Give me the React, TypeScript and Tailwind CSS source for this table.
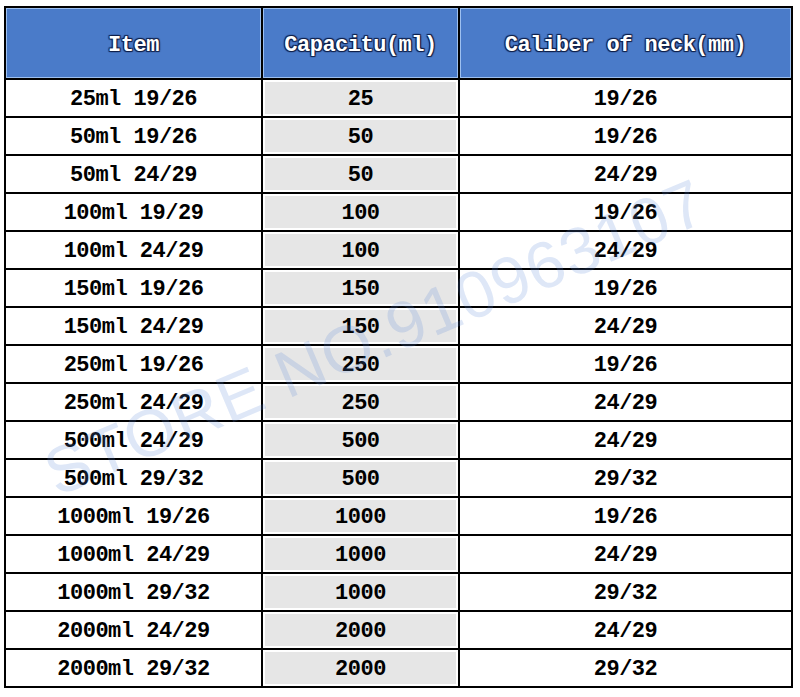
import type { ReactNode } from "react";

type Row = {
    item: string;
    capacity: string;
    neck: string;
};

const Rows: Row[] = [
    { item: "25ml 19/26", capacity: "25", neck: "19/26" },
    { item: "50ml 19/26", capacity: "50", neck: "19/26" },
    { item: "50ml 24/29", capacity: "50", neck: "24/29" },
    { item: "100ml 19/29", capacity: "100", neck: "19/26" },
    { item: "100ml 24/29", capacity: "100", neck: "24/29" },
    { item: "150ml 19/26", capacity: "150", neck: "19/26" },
    { item: "150ml 24/29", capacity: "150", neck: "24/29" },
    { item: "250ml 19/26", capacity: "250", neck: "19/26" },
    { item: "250ml 24/29", capacity: "250", neck: "24/29" },
    { item: "500ml 24/29", capacity: "500", neck: "24/29" },
    { item: "500ml 29/32", capacity: "500", neck: "29/32" },
    { item: "1000ml 19/26", capacity: "1000", neck: "19/26" },
    { item: "1000ml 24/29", capacity: "1000", neck: "24/29" },
    { item: "1000ml 29/32", capacity: "1000", neck: "29/32" },
    { item: "2000ml 24/29", capacity: "2000", neck: "24/29" },
    { item: "2000ml 29/32", capacity: "2000", neck: "29/32" },
];

const HeadCell = ({ children }: { children: ReactNode }) => (
    <div className="h-[70px] pt-[5px] bg-[#4a7bc9] border border-[#9dc0f0] flex items-center justify-center text-white font-bold [text-shadow:0_0_1px_#10204a,1px_1px_1px_#10204a,-1px_-1px_1px_#10204a,1px_-1px_1px_#10204a,-1px_1px_1px_#10204a]">
        {children}
    </div>
);

const App = () => {
    return (
        <main className="relative w-[800px] h-[697px] bg-white overflow-hidden font-['Liberation_Mono',monospace] text-[22px] tracking-[-0.5px]">
            {/* TABLE */}
            <div className="ml-[4px] mt-[6px] w-[789px] bg-black p-[2px] grid grid-cols-[255px_195px_331px] gap-[2px]">
                <HeadCell>Item</HeadCell>
                <HeadCell>Capacitu(ml)</HeadCell>
                <HeadCell>Caliber of neck(mm)</HeadCell>

                {Rows.map((row, index) => (
                    <div key={index} className="contents">
                        <div className="h-[36px] pt-[2px] bg-white flex items-center justify-center text-black font-bold">
                            {row.item}
                        </div>
                        <div className="h-[36px] bg-white p-[2px]">
                            <div className="h-full pt-[2px] bg-[#e6e6e6] flex items-center justify-center text-black font-bold">
                                {row.capacity}
                            </div>
                        </div>
                        <div className="h-[36px] pt-[2px] bg-white flex items-center justify-center text-black font-bold">
                            {row.neck}
                        </div>
                    </div>
                ))}
            </div>

            {/* WATERMARK */}
            <div className="pointer-events-none absolute left-[-15px] top-[288px] w-[780px] text-center -rotate-[23deg] font-['Liberation_Sans',sans-serif] text-[66px] tracking-[1px] text-[#5b86d6]/20">
                STORE NO.910963107
            </div>
        </main>
    );
};

export default App;
